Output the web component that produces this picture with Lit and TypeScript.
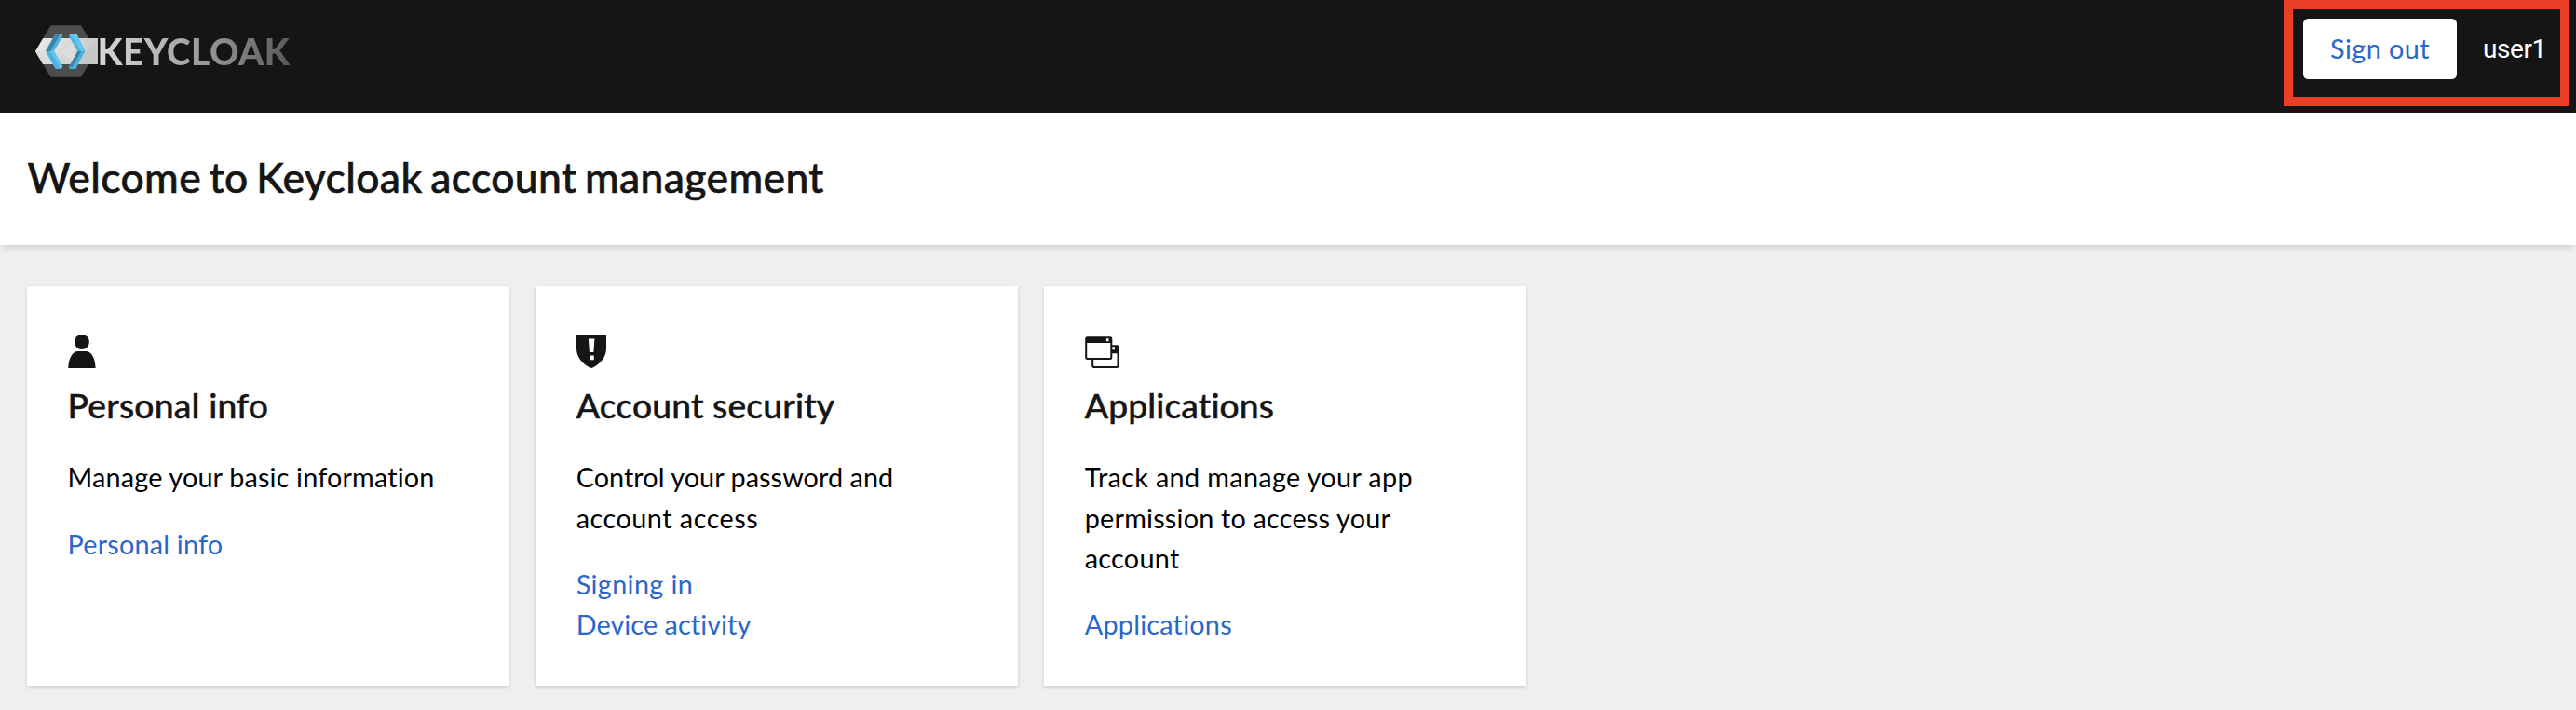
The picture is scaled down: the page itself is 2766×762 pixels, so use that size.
import { LitElement, html, css, svg } from 'lit';
import { customElement, property } from 'lit/decorators.js';

interface Line {
  text: string;
  tracking: number;
}

interface CardData {
  icon: 'user' | 'shield' | 'apps';
  title: Line;
  body: Line[];
  links: Line[];
}

const CARDS: CardData[] = [
  {
    icon: 'user',
    title: { text: 'Personal info', tracking: 0.2 },
    body: [{ text: 'Manage your basic information', tracking: 0.16 }],
    links: [{ text: 'Personal info', tracking: 0.2 }],
  },
  {
    icon: 'shield',
    title: { text: 'Account security', tracking: 0.16 },
    body: [
      { text: 'Control your password and', tracking: 0.05 },
      { text: 'account access', tracking: 0.49 },
    ],
    links: [
      { text: 'Signing in', tracking: 0.37 },
      { text: 'Device activity', tracking: 0.07 },
    ],
  },
  {
    icon: 'apps',
    title: { text: 'Applications', tracking: 0.12 },
    body: [
      { text: 'Track and manage your app', tracking: 0.34 },
      { text: 'permission to access your', tracking: 0.2 },
      { text: 'account', tracking: 0.26 },
    ],
    links: [{ text: 'Applications', tracking: 0.22 }],
  },
];

const ICONS = {
  user: svg`
    <circle cx="14.9" cy="8" r="8"/>
    <path d="M0.2 36C0.8 27.5 3 22 6.5 19.4Q8.2 18.1 11 18.1H19Q21.8 18.1 23.500 19.400C27 22 29.200 27.500 29.600 36Z"/>`,
  shield: svg`
    <path fill-rule="evenodd" d="M1 0H31Q32 0 32 1V15C32 24 26 31 17.500 35.500Q16 36.300 14.500 35.500C6 31 0 24 0 15V1Q0 0 1 0ZM12.900 4.500L13.900 19H18.400L19.400 4.500ZM14 22.600V27.200H18.800V22.600Z"/>`,
  apps: svg`
    <path fill-rule="evenodd" d="M2.500 2.200H27Q29.300 2.200 29.300 4.500V11.200H34.200Q36.500 11.200 36.500 13.500V33.700Q36.500 36 34.200 36H9.500Q7.200 36 7.200 33.700V27H2.500Q0.200 27 0.200 24.700V4.500Q0.200 2.200 2.500 2.200ZM2.200 9.100V24.200Q2.200 25 3 25H26.500Q27.300 25 27.300 24.200V9.100ZM22.900 4.200V7.200H25.500V4.200ZM29.300 13.300V16.300H32V13.300ZM29.300 20.200V24.700Q29.300 27 27 27H9.200V33.200Q9.200 34 10 34H33.700Q34.500 34 34.500 33.200V20.200Z"/>`,
};

@customElement('account-card')
class AccountCard extends LitElement {
  @property({ attribute: false }) data!: CardData;

  static styles = css`
    :host {
      display: block;
      box-sizing: border-box;
      padding: 52px 43.8px 0;
      background: #fff;
      box-shadow: 0 1.8px 3.6px rgba(3, 3, 3, 0.12), 0 0 3.6px rgba(3, 3, 3, 0.06);
    }
    .icon {
      display: block;
      width: 37px;
      height: 36px;
      fill: #151515;
    }
    h2 {
      margin: 16.5px 0 33px;
      font-size: 37.2px;
      font-weight: 500;
      line-height: 46.8px;
      color: #151515;
      white-space: nowrap;
      -webkit-text-stroke: 0.5px #151515;
    }
    .body {
      margin-bottom: 28px;
      color: #000;
    }
    .line {
      display: block;
      line-height: 43.2px;
      white-space: nowrap;
    }
    .link {
      color: #2b66c8;
      text-decoration: none;
    }
  `;

  render() {
    const { icon, title, body, links } = this.data;
    return html`
      <svg class="icon" viewBox="0 0 37 36">${ICONS[icon]}</svg>
      <h2 style="letter-spacing:${title.tracking}px">${title.text}</h2>
      <div class="body">
        ${body.map((l) => html`<span class="line" style="letter-spacing:${l.tracking}px">${l.text}</span>`)}
      </div>
      ${links.map((l) => html`<a class="line link" style="letter-spacing:${l.tracking}px">${l.text}</a>`)}
    `;
  }
}

@customElement('keycloak-logo')
class KeycloakLogo extends LitElement {
  static styles = css`
    :host {
      display: flex;
      align-items: center;
      height: 56px;
    }
    .mark {
      display: block;
      width: 68px;
      height: 56px;
    }
    .word {
      margin-left: -1.500px;
      font: 900 39px/56px Lato, sans-serif;
      letter-spacing: 0.35px;
      color: transparent;
      background: linear-gradient(90deg, #d6d6d6 0%, #b4b4b4 35%, #858585 70%, #5a5a5a 100%);
      -webkit-background-clip: text;
      background-clip: text;
    }
  `;

  render() {
    return html`
      <svg class="mark" viewBox="38 27 68 56">
        <defs>
          <linearGradient id="band" x1="0" x2="1" y1="0" y2="0.3">
            <stop offset="0" stop-color="#ececec"/>
            <stop offset="1" stop-color="#c9c9c9"/>
          </linearGradient>
        </defs>
        <path fill="#4d4d4d" d="M38 55L54.500 27.300H87L103.300 55L87 82.700H54.500Z"/>
        <path fill="url(#band)" d="M38 55L46.200 41H105V69H46.200Z"/>
        <path fill="#dcdcdc" d="M38 55L52 55L46.200 69ZM66 55L80 41V69Z"/>
        <path fill="#c4c4c4" d="M91 55L105 48V69H88Z" opacity="0.6"/>
        <path fill="#4db3e0" d="M59.500 36.300H66.500L67.400 38.600L58 54.900L67.400 71.600L66 74H59.500L49 55Z"/>
        <path fill="#3d86a8" d="M59.500 36.300L49 55L54 54.900L64.500 37.600Z"/>
        <path fill="#66c5ec" d="M54 54.900L58 54.900L67.400 71.600L64.500 73Z"/>
        <path fill="#4db3e0" d="M75 36.300H82.300L91.400 54.900L81.400 74H74.800L74 71.600L83.400 55L74 38.800Z"/>
        <path fill="#66c5ec" d="M75 36.300H82.300L91.400 54.900H87L77 38.500Z"/>
        <path fill="#3d86a8" d="M83.400 55L87.300 54.900L77.500 72.600L74 71.600Z"/>
      </svg>
      <span class="word">KEYCLOAK</span>
    `;
  }
}

@customElement('app-root')
class AppRoot extends LitElement {
  static styles = css`
    :host {
      display: flex;
      flex-direction: column;
      position: relative;
      box-sizing: border-box;
      width: 100%;
      height: 762px;
      overflow: hidden;
      background: #efefef;
      font-family: Lato, 'Open Sans', sans-serif;
      font-size: 28.8px;
    }
    header {
      display: flex;
      flex: none;
      justify-content: space-between;
      align-items: flex-start;
      box-sizing: border-box;
      height: 121px;
      padding: 20px 36px 0 38px;
      background: #151515;
    }
    .logo {
      margin-top: 7px;
    }
    .tools {
      display: flex;
      align-items: center;
      gap: 28px;
    }
    .sign-out {
      width: 165px;
      height: 65px;
      padding: 0 0 1px;
      border: 0;
      border-radius: 5.4px;
      background: #fff;
      color: #2b66c8;
      font: inherit;
      letter-spacing: 0.42px;
    }
    .user {
      width: 64px;
      padding-bottom: 1px;
      color: #fff;
      font: 28px/43px Roboto, sans-serif;
      letter-spacing: -0.4px;
    }
    .callout {
      position: absolute;
      top: 0;
      right: 7px;
      box-sizing: border-box;
      width: 307px;
      height: 114px;
      border: 10px solid #ea3f26;
    }
    .banner {
      flex: none;
      box-sizing: border-box;
      height: 142px;
      padding: 41.3px 29.4px 0;
      background: #fff;
      box-shadow: 0 3.6px 7.2px -1.8px rgba(3, 3, 3, 0.16);
    }
    h1 {
      margin: 0;
      font-size: 44.4px;
      font-weight: 500;
      line-height: 56.2px;
      letter-spacing: 0.38px;
      word-spacing: -3px;
      color: #151515;
      -webkit-text-stroke: 0.6px #151515;
    }
    main {
      display: grid;
      grid-template-columns: repeat(3, 517.8px);
      grid-template-rows: 429px;
      gap: 28.3px;
      padding: 44px 28.8px 0;
    }
  `;

  render() {
    return html`
      <header>
        <keycloak-logo class="logo"></keycloak-logo>
        <div class="tools">
          <button class="sign-out">Sign out</button>
          <span class="user">user1</span>
        </div>
      </header>
      <section class="banner"><h1>Welcome to Keycloak account management</h1></section>
      <main>${CARDS.map((c) => html`<account-card .data=${c}></account-card>`)}</main>
      <div class="callout"></div>
    `;
  }
}
